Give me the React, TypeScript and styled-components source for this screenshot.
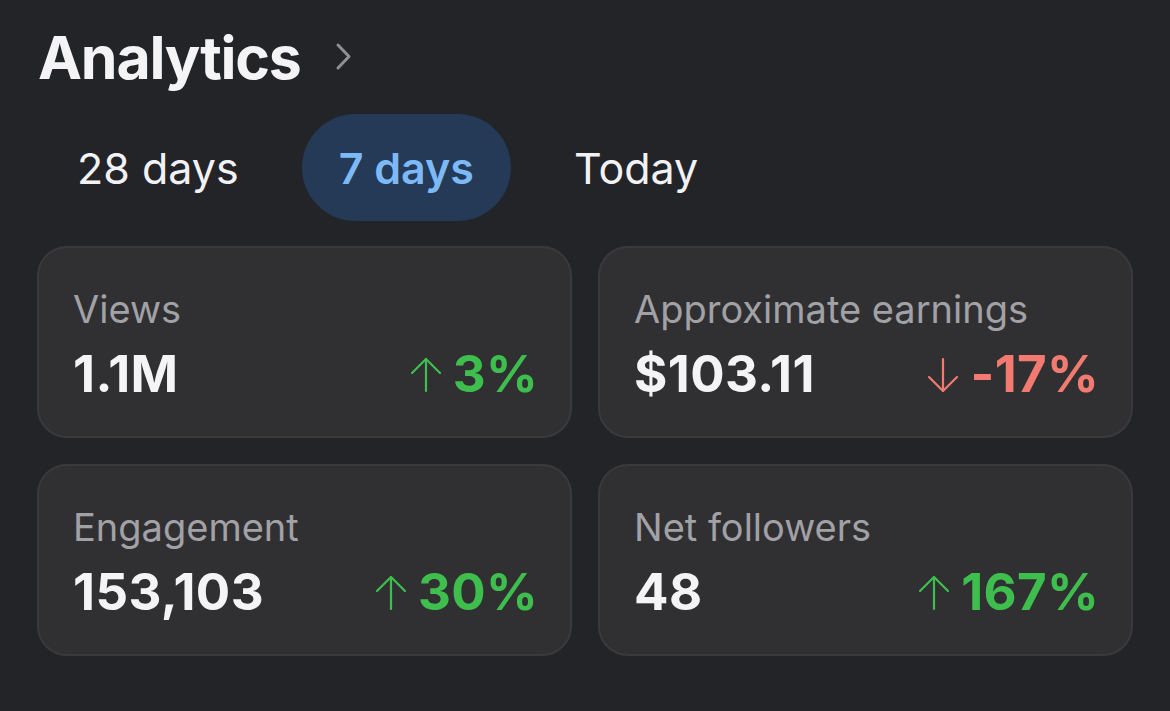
import React from "react";
import styled, { createGlobalStyle } from "styled-components";

const Global = createGlobalStyle`
  html, body { margin: 0; padding: 0; background: #232428; }
  body { font-family: Inter, "Noto Sans", sans-serif; -webkit-font-smoothing: antialiased; }
`;

const Page = styled.div`
  width: 1170px;
  height: 711px;
  box-sizing: border-box;
  padding: 22px 37px 0;
  background: #232428;
  color: #f4f4f6;
`;

const Header = styled.div`
  display: flex;
  align-items: center;
  gap: 34px;
  padding-left: 1px;
`;

const Title = styled.h1`
  margin: 0;
  font-size: 59px;
  line-height: 71px;
  font-weight: 700;
  letter-spacing: -1.2px;
  color: #f4f4f6;
`;

const Chevron = styled.svg`
  width: 17px;
  height: 29px;
  margin-top: -2px;
`;

const Tabs = styled.div`
  display: flex;
  gap: 26px;
  margin: 21px 0 25px 3px;
`;

const Tab = styled.div<{ $active?: boolean }>`
  height: 107px;
  display: flex;
  align-items: center;
  padding: 0 37px;
  border-radius: 54px;
  font-size: 43px;
  font-weight: ${(p) => (p.$active ? 600 : 400)};
  color: ${(p) => (p.$active ? "#7cb9f6" : "#f2f2f5")};
  background: ${(p) => (p.$active ? "#243a56" : "transparent")};
`;

const Grid = styled.div`
  display: grid;
  grid-template-columns: 1fr 1fr;
  gap: 26px 26px;
`;

const Card = styled.div`
  box-sizing: border-box;
  background: #303033;
  border: 2px solid #3a3a3d;
  border-radius: 30px;
  padding: 38px 32px 33px 34px;
  display: flex;
  flex-direction: column;
  gap: 12px;
`;

const Label = styled.div`
  font-size: 38px;
  line-height: 46px;
  color: #a1a1a6;
  font-weight: 400;
`;

const ValueRow = styled.div`
  display: flex;
  justify-content: space-between;
  align-items: center;
  height: 59px;
`;

const Value = styled.div`
  font-size: 51px;
  line-height: 59px;
  font-weight: 700;
  letter-spacing: 0.4px;
  color: #f4f4f6;
`;

const Delta = styled.div<{ $color: string }>`
  display: flex;
  align-items: center;
  gap: 11px;
  font-size: 51px;
  line-height: 59px;
  font-weight: 700;
  letter-spacing: 0.3px;
  color: ${(p) => p.$color};
`;

const Arrow = styled.svg`
  width: 32px;
  height: 36px;
  margin-top: 2px;
`;

const GREEN = "#3ebf4d";
const RED = "#f27a71";

function DeltaArrow({ up, color }: { up: boolean; color: string }) {
  return (
    <Arrow viewBox="0 0 32 36" fill="none" stroke={color} strokeWidth={2.2} strokeLinecap="round" strokeLinejoin="round">
      {up ? (
        <>
          <path d="M16 2 L16 34" />
          <path d="M2 16 L16 2 L30 16" />
        </>
      ) : (
        <>
          <path d="M16 2 L16 34" />
          <path d="M2 20 L16 34 L30 20" />
        </>
      )}
    </Arrow>
  );
}

const stats = [
  { label: "Views", value: "1.1M", delta: "3%", up: true },
  { label: "Approximate earnings", value: "$103.11", delta: "-17%", up: false },
  { label: "Engagement", value: "153,103", delta: "30%", up: true },
  { label: "Net followers", value: "48", delta: "167%", up: true },
];

export default function App() {
  return (
    <Page>
      <Global />
      <Header>
        <Title>Analytics</Title>
        <Chevron viewBox="0 0 17 29" fill="none" stroke="#8f8f94" strokeWidth={3} strokeLinecap="round" strokeLinejoin="round">
          <path d="M3 3 L14 14.5 L3 26" />
        </Chevron>
      </Header>
      <Tabs>
        <Tab>28 days</Tab>
        <Tab $active>7 days</Tab>
        <Tab>Today</Tab>
      </Tabs>
      <Grid>
        {stats.map((s) => {
          const c = s.up ? GREEN : RED;
          return (
            <Card key={s.label}>
              <Label>{s.label}</Label>
              <ValueRow>
                <Value>{s.value}</Value>
                <Delta $color={c}>
                  <DeltaArrow up={s.up} color={c} />
                  {s.delta}
                </Delta>
              </ValueRow>
            </Card>
          );
        })}
      </Grid>
    </Page>
  );
}
